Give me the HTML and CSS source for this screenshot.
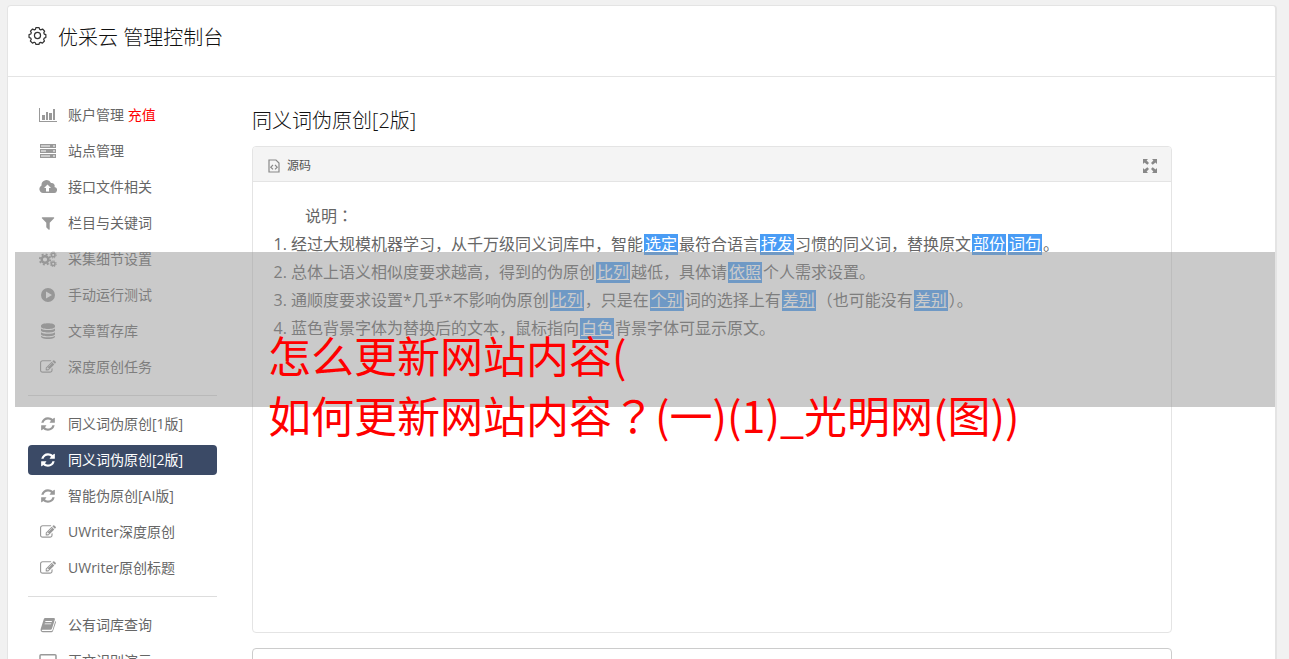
FILE: index.html
```html
<!DOCTYPE html>
<html lang="zh-CN">
<head>
<meta charset="utf-8">
<meta name="viewport" content="width=device-width, initial-scale=1">
<title>优采云 管理控制台</title>
<link rel="stylesheet" href="styles.css">
</head>
<body>
<svg class="sprite" aria-hidden="true">
  <symbol id="refresh" viewBox="0 0 1792 1792"><path d="M1639 1056q0 5-1 7-64 268-268 434.500t-478 166.500q-146 0-282.500-55t-243.500-157l-129 129q-19 19-45 19t-45-19-19-45v-448q0-26 19-45t45-19h448q26 0 45 19t19 45-19 45l-137 137q71 66 161 102t187 36q134 0 250-65t186-179q11-17 53-117 8-23 30-23h192q13 0 22.500 9.500t9.500 22.500zm25-800v448q0 26-19 45t-45 19h-448q-26 0-45-19t-19-45 19-45l138-138q-148-137-349-137-134 0-250 65t-186 179q-11 17-53 117-8 23-30 23h-199q-13 0-22.500-9.500t-9.500-22.500v-7q65-268 270-434.500t480-166.500q146 0 284 55.500t245 156.500l130-129q19-19 45-19t45 19 19 45z"/></symbol>
  <symbol id="edit" viewBox="0 0 1792 1792"><path d="M888 1184l116-116-152-152-116 116v56h96v96h56zm440-720q-16-16-33 1l-350 350q-17 17-1 33t33-1l350-350q17-17 1-33zm80 594v190q0 119-84.500 203.500t-203.500 84.500h-832q-119 0-203.500-84.500t-84.500-203.500v-832q0-119 84.500-203.500t203.500-84.500h832q63 0 117 25 15 7 18 23 3 17-9 29l-49 49q-14 14-32 8-23-6-45-6h-832q-66 0-113 47t-47 113v832q0 66 47 113t113 47h832q66 0 113-47t47-113v-126q0-13 9-22l64-64q15-15 35-7t20 29zm-96-738l288 288-672 672h-288v-288zm444 132l-92 92-288-288 92-92q28-28 68-28t68 28l152 152q28 28 28 68t-28 68z"/></symbol>
  <symbol id="filter" viewBox="0 0 1792 1792"><path d="M1595 295q17 41-14 70l-493 493v742q0 42-39 59-13 5-25 5-27 0-45-19l-256-256q-19-19-19-45v-486l-493-493q-31-29-14-70 17-39 59-39h1280q42 0 59 39z"/></symbol>
  <symbol id="chart" viewBox="0 0 18 16"><path d="M0 1h1v13h17v1H0zM3 8h3v5H3zM7 5h2v8H7zM10 6h3v7h-3zM14 2h2v11h-2z"/></symbol>
  <symbol id="server" viewBox="0 0 18 16"><path fill-rule="evenodd" d="M1 1h16v4H1zM2 2.500h9v1H2zM14 2.500h2v1h-2zM1 6h16v4H1zM2 7.500h5v1H2zM14 7.500h2v1h-2zM1 11h16v4H1zM2 12.500h9v1H2zM14 12.500h2v1h-2z"/></symbol>
  <symbol id="cloud" viewBox="0 0 18 16"><path fill-rule="evenodd" d="M4 14a4 4 0 0 1-1.500-7.500A5 5 0 0 1 12 4a3 3 0 0 1 3.500 4A3 3 0 0 1 14.500 14zM8.500 5.500L5 9h2v3.500h3V9h2z"/></symbol>
  <symbol id="gears" viewBox="0 0 18 16"><g fill="none" stroke="currentColor"><circle cx="6" cy="8.500" r="3.300" stroke-width="2.400"/><circle cx="6" cy="8.500" r="5.200" stroke-width="1.800" stroke-dasharray="2 2.084"/><circle cx="14.200" cy="4" r="1.800" stroke-width="1.500"/><circle cx="14.200" cy="4" r="3" stroke-width="1" stroke-dasharray="1.300 1.056"/><circle cx="14.200" cy="12.800" r="1.800" stroke-width="1.500"/><circle cx="14.200" cy="12.800" r="3" stroke-width="1" stroke-dasharray="1.300 1.056"/></g></symbol>
  <symbol id="play" viewBox="0 0 16 16"><path fill-rule="evenodd" d="M8 1a7 7 0 1 1 0 14A7 7 0 0 1 8 1zM6 4.500v7L12 8z"/></symbol>
  <symbol id="database" viewBox="0 0 16 16"><path d="M1 2.800C1-.5 15-.5 15 2.800v1C15 6.800 1 6.800 1 3.800zM1 5.500c2 2 12 2 14 0v2c0 2.600-14 2.600-14 0zM1 9.200c2 2 12 2 14 0v2c0 2.600-14 2.600-14 0zM1 12.800c2 2 12 2 14 0v1c0 3-14 3-14 0z"/></symbol>
  <symbol id="book" viewBox="0 0 16 16"><path fill-rule="evenodd" d="M5 1h9q1.300.2.900 1.500L12 11.500q-.4 1.200-1.700 1.200H2.500q-1 0-.7.700t1.200.7h8.500q.8 0 1-.8L15.300 4q1 .5.600 1.500L13 14q-.5 1.200-1.600 1.200H3Q.3 15 .6 12.300L3.500 3Q3.900 1.200 5 1zM5.500 4l-.3.900h6.500L12 4zM4.800 6.400l-.3.900H11l.3-.9z"/></symbol>
  <symbol id="monitor" viewBox="0 0 18 16"><path fill="none" stroke="currentColor" stroke-width="1.500" d="M2 1.800h14q1 0 1 1V12H1V2.800q0-1 1-1zM6 15h6"/></symbol>
  <symbol id="gear" viewBox="0 0 20 20"><g fill="none" stroke="currentColor" stroke-width="1.300"><circle cx="10" cy="10" r="3.200"/><path stroke-linejoin="round" d="M8.300 1.700h3.400l.6 1.900 1.200.5 1.800-.9 2.200 2.300-.9 1.700.5 1.300 1.700.6v3l-1.700.7-.6 1.200.8 1.800-2.100 2.200-1.900-.8-1.200.5-.6 1.700H8.400l-.7-1.800-1.200-.5-1.800.9-2.200-2.200.9-1.800-.5-1.200-1.800-.7v-3l1.800-.7.600-1.200-.9-1.800 2.200-2.200 1.800.9 1.200-.5z"/></g></symbol>
  <symbol id="code" viewBox="0 0 12 14"><path fill="none" stroke="currentColor" stroke-width="1.200" d="M1 1h7l3 3v9H1zM5 6L2.800 8.200 5 10.400M7 6l2.200 2.200L7 10.400"/></symbol>
  <symbol id="expand" viewBox="0 0 14 14"><path d="M0 0h5L3.600 1.400 6 4 4.300 5.800 1.500 3.500 0 5zM14 0v5l-1.500-1.500L9.700 5.800 8 4l2.400-2.600L9 0zM0 14V9l1.500 1.500 2.800-2.300L6 10l-2.400 2.600L5 14zM14 14H9l1.400-1.400L8 10l1.700-1.800 2.800 2.300L14 9z"/></symbol>
</svg>
<div class="card">
  <header class="card-header">
    <svg class="brand-icon"><use href="#gear"/></svg>
    <h1 class="brand">优采云 管理控制台</h1>
  </header>
  <div class="layout">
    <nav class="sidebar" aria-label="主菜单">
      <a class="item" href="#"><svg class="icon"><use href="#chart"/></svg><span>账户管理 <span class="recharge">充值</span></span></a>
      <a class="item" href="#"><svg class="icon"><use href="#server"/></svg>站点管理</a>
      <a class="item" href="#"><svg class="icon"><use href="#cloud"/></svg>接口文件相关</a>
      <a class="item" href="#"><svg class="icon"><use href="#filter"/></svg>栏目与关键词</a>
      <a class="item" href="#"><svg class="icon"><use href="#gears"/></svg>采集细节设置</a>
      <a class="item" href="#"><svg class="icon"><use href="#play"/></svg>手动运行测试</a>
      <a class="item" href="#"><svg class="icon"><use href="#database"/></svg>文章暂存库</a>
      <a class="item" href="#"><svg class="icon"><use href="#edit"/></svg>深度原创任务</a>
      <hr class="divider">
      <a class="item" href="#"><svg class="icon"><use href="#refresh"/></svg>同义词伪原创[1版]</a>
      <a class="item active" href="#" aria-current="page"><svg class="icon"><use href="#refresh"/></svg>同义词伪原创[2版]</a>
      <a class="item" href="#"><svg class="icon"><use href="#refresh"/></svg>智能伪原创[AI版]</a>
      <a class="item" href="#"><svg class="icon"><use href="#edit"/></svg>UWriter深度原创</a>
      <a class="item" href="#"><svg class="icon"><use href="#edit"/></svg>UWriter原创标题</a>
      <hr class="divider">
      <a class="item" href="#"><svg class="icon"><use href="#book"/></svg>公有词库查询</a>
      <a class="item" href="#"><svg class="icon"><use href="#monitor"/></svg>正文识别演示</a>
    </nav>
    <main class="content">
      <h2 class="title">同义词伪原创[2版]</h2>
      <section class="editor">
        <div class="toolbar">
          <button class="tool" type="button"><svg class="code-icon"><use href="#code"/></svg>源码</button>
          <button class="tool" type="button" aria-label="全屏"><svg class="expand-icon"><use href="#expand"/></svg></button>
        </div>
        <div class="document">
          <p class="lead">说明<span class="centred" lang="zh-TW">：</span></p>
          <ol class="notes">
            <li>经过大规模机器学习，从千万级同义词库中，智能<u class="swap">选定</u>最符合语言<u class="swap">抒发</u>习惯的同义词，替换原文<u class="swap">部份</u><u class="swap">词句</u>。</li>
            <li>总体上语义相似度要求越高，得到的伪原创<u class="swap">比列</u>越低，具体请<u class="swap">依照</u>个人需求设置。</li>
            <li>通顺度要求设置*几乎*不影响伪原创<u class="swap">比列</u>，只是在<u class="swap">个别</u>词的选择上有<u class="swap">差别</u>（也可能没有<u class="swap">差别</u>）。</li>
            <li>蓝色背景字体为替换后的文本，鼠标指向<u class="swap">白色</u>背景字体可显示原文。</li>
          </ol>
        </div>
      </section>
      <textarea class="source" aria-label="原文"></textarea>
    </main>
  </div>
  <div class="banner">怎么更新网站内容(<br>如何更新网站内容<span class="centred" lang="zh-TW">？</span>(一)(1)_光明网(图))</div>
</div>
</body>
</html>
```
FILE: styles.css
```css
* { box-sizing: border-box; }

body {
  margin: 0;
  padding: 5px 12px 0 7px;
  height: 100vh;
  overflow: hidden;
  background: #f1f1f1;
  color: #666;
  font: 14px/20px "Open Sans", "Noto Sans CJK SC", sans-serif;
}

.sprite { display: none; }
svg { fill: currentColor; flex: none; }

.card {
  position: relative;
  border: 1px solid #e4e4e4;
  border-right-width: 2px;
  border-radius: 4px;
  background: #fff;
}

.card-header {
  display: flex;
  align-items: flex-start;
  gap: 11px;
  padding: 16px 20px 22px;
  border-bottom: 1px solid #e4e4e4;
  color: #333;
}

.brand-icon { width: 19px; height: 19px; margin-top: 4px; }

.brand, .title {
  margin: 0;
  color: #111;
  font-size: 20px;
  font-weight: 300;
  line-height: 32px;
}

.layout {
  display: grid;
  grid-template-columns: 189px 1fr;
  gap: 35px;
  padding: 23px 103px 0 20px;
}

.sidebar { display: flex; flex-direction: column; gap: 6px; }

.item {
  display: flex;
  align-items: center;
  gap: 11px;
  height: 30px;
  padding: 0 11px;
  border-radius: 4px;
  color: #666;
  text-decoration: none;
  white-space: nowrap;
}

.icon { width: 18px; height: 16px; color: #999; }
.recharge { color: #f00; }
.active { background: #3b4a66; color: #fff; }
.active .icon { color: #fff; }

.divider {
  width: 100%;
  margin: 7px 0;
  border: 0;
  border-top: 1px solid #ddd;
}

.content { padding-top: 5px; }
.title { margin-bottom: 9px; }

.editor {
  border: 1px solid #e4e4e4;
  border-radius: 4px;
}

.toolbar {
  display: flex;
  justify-content: space-between;
  height: 35px;
  padding: 3px 14px 0 15px;
  border-bottom: 1px solid #e4e4e4;
  border-radius: 3px 3px 0 0;
  background: #f4f4f4;
}

.tool {
  display: flex;
  align-items: center;
  gap: 7px;
  padding: 0;
  border: 0;
  background: none;
  color: #555;
  font: 12px/18px "Open Sans", "Noto Sans CJK SC", sans-serif;
}

.code-icon { width: 12px; height: 14px; color: #888; }
.expand-icon { width: 14px; height: 14px; color: #888; }

.document {
  min-height: 450px;
  padding: 19px 20px 20px 38px;
  font-size: 16px;
  line-height: 28px;
}

.lead { margin: 0; padding-left: 14px; }
.notes { margin: 0; padding: 0; }
.centred { font-family: "Noto Sans CJK TC", sans-serif; }

.swap {
  margin: 0 1px;
  padding: 0 1px;
  background: linear-gradient(#499cf5, #499cf5) center / 100% 21px no-repeat;
  color: #fff;
}

.source {
  display: block;
  width: 100%;
  height: 200px;
  margin-top: 15px;
  border: 1px solid #ccc;
  border-radius: 4px;
  resize: none;
}

.banner {
  position: absolute;
  top: 246px;
  left: 7px;
  right: 0;
  height: 155px;
  padding: 72px 0 0 253px;
  background: rgba(150, 150, 150, 0.5);
  color: #f00;
  font-family: "Noto Sans CJK SC", sans-serif;
  font-size: 43px;
  line-height: 60px;
  white-space: nowrap;
}
```
